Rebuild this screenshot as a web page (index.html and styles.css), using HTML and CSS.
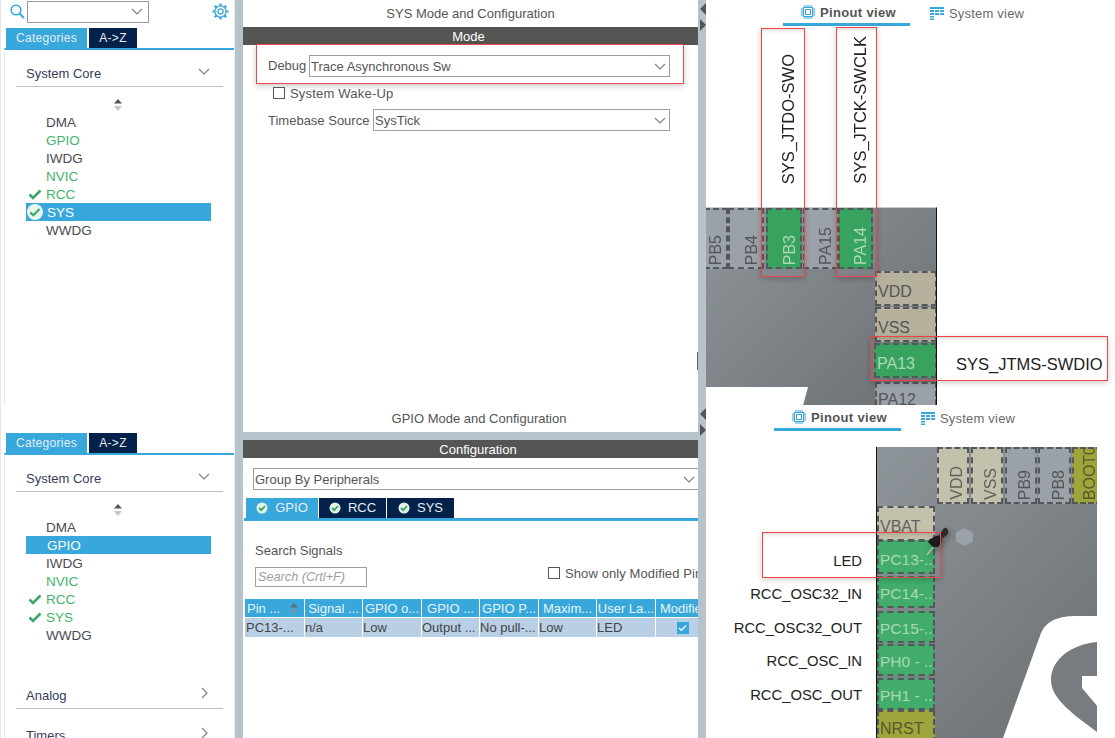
FILE: index.html
```html
<!DOCTYPE html>
<html lang="en">
<head>
    <meta charset="UTF-8">
    <meta name="viewport" content="width=device-width, initial-scale=1.0">
    <title>STM32 Pinout Configuration</title>
    <link rel="stylesheet" href="styles.css">
</head>
<body>
    <svg class="defs" width="0" height="0">
        <symbol id="check" viewBox="0 0 14 12"><path d="M1.5 6.5 5 10 12.5 2.5" fill="none" stroke="#3aa867" stroke-width="2.6"/></symbol>
        <symbol id="chevron-down" viewBox="0 0 12 7"><path d="M1 1 6 6 11 1" fill="none" stroke="#7b8388" stroke-width="1.2"/></symbol>
        <symbol id="chevron-right" viewBox="0 0 7 12"><path d="M1 1 6 6 1 11" fill="none" stroke="#7b8388" stroke-width="1.2"/></symbol>
        <symbol id="sort" viewBox="0 0 10 12"><path d="M5 0 9 4.5H1Z" fill="#555"/><path d="M1 7H9L5 12Z" fill="#c4c8ca"/></symbol>
        <symbol id="sort-head" viewBox="0 0 10 12"><path d="M5 0 9.5 5H.5Z" fill="#5f6f7a"/><path d="M.5 7H9.5L5 12Z" fill="#7d94a3"/></symbol>
        <symbol id="chip" viewBox="0 0 14 14"><g fill="none" stroke="#38a8dc"><rect x="2.5" y="2.5" width="9" height="9"/><rect x="4.5" y="4.5" width="5" height="5"/><path d="M4 0V2M6 0V2M8 0V2M10 0V2M4 12V14M6 12V14M8 12V14M10 12V14M0 4H2M0 6H2M0 8H2M0 10H2M12 4H14M12 6H14M12 8H14M12 10H14"/></g></symbol>
        <symbol id="sysview" viewBox="0 0 14 13"><g fill="#38a8dc"><rect x="0" y="0" width="14" height="2"/><rect x="0" y="3" width="4" height="2"/><rect x="5" y="3" width="4" height="2"/><rect x="10" y="3" width="4" height="2"/><rect x="0" y="6" width="4" height="2"/><rect x="5" y="6" width="4" height="2"/><rect x="10" y="6" width="4" height="2"/><rect x="0" y="9" width="4" height="1.5"/><rect x="0" y="11.5" width="4" height="1.5"/></g></symbol>
        <symbol id="tab-check" viewBox="0 0 12 12"><circle cx="6" cy="6" r="5.5" fill="#e4f2ea"/><path d="M3 6 5.2 8.2 9 4" fill="none" stroke="#3aa867" stroke-width="1.8"/></symbol>
    </svg>

    <main class="page">
        <!-- first capture: SYS -->
        <section class="side">
            <div class="search-row">
                <svg class="search-icon" width="15" height="15" viewBox="0 0 15 15"><circle cx="6" cy="6" r="4.8" fill="none" stroke="#38a8dc" stroke-width="1.6"/><path d="M9.5 9.5 14 14" stroke="#38a8dc" stroke-width="2"/></svg>
                <div class="search-box"><svg class="chev" width="12" height="7"><use href="#chevron-down"/></svg></div>
                <svg class="gear" width="17" height="17" viewBox="0 0 17 17"><circle cx="8.5" cy="8.5" r="2.6" fill="none" stroke="#38a8dc" stroke-width="1.3"/><circle cx="8.5" cy="8.5" r="5.6" fill="none" stroke="#38a8dc" stroke-width="1.3"/><path d="M8.5 0.5V3M8.5 14V16.5M0.5 8.5H3M14 8.5H16.5M2.8 2.8 4.6 4.6M12.4 12.4 14.2 14.2M2.8 14.2 4.6 12.4M12.4 4.6 14.2 2.8" stroke="#38a8dc" stroke-width="2.2"/></svg>
            </div>
            <div class="cat-tabs">
                <span class="cat-tab active">Categories</span>
                <span class="cat-tab">A-&gt;Z</span>
            </div>
            <div class="cat-body">
                <div class="section-head"><span>System Core</span><svg width="12" height="7"><use href="#chevron-down"/></svg></div>
                <svg class="sort-mark" width="10" height="12"><use href="#sort"/></svg>
                <ul class="items">
                    <li>DMA</li>
                    <li class="ok">GPIO</li>
                    <li>IWDG</li>
                    <li class="ok">NVIC</li>
                    <li class="ok"><svg class="tick" width="14" height="12"><use href="#check"/></svg>RCC</li>
                    <li class="selected"><span class="tick-round"><svg width="12" height="10"><use href="#check"/></svg></span>SYS</li>
                    <li>WWDG</li>
                </ul>
            </div>
        </section>

        <div class="splitter"></div>

        <section class="middle">
            <h2 class="mid-title">SYS Mode and Configuration</h2>
            <div class="bar">Mode</div>
            <div class="debug-row">
                <label class="debug-label">Debug</label>
                <div class="select debug-select">Trace Asynchronous Sw<svg width="12" height="7"><use href="#chevron-down"/></svg></div>
            </div>
            <div class="wake-row"><span class="box"></span>System Wake-Up</div>
            <div class="timebase-row">
                <label>Timebase Source</label>
                <div class="select time-select">SysTick<svg width="12" height="7"><use href="#chevron-down"/></svg></div>
            </div>
        </section>

        <div class="gutter">
            <span class="arrow-left"></span>
            <span class="arrow-right"></span>
            <span class="handle"></span>
        </div>

        <section class="right">
            <div class="views">
                <span class="view active"><svg width="14" height="14"><use href="#chip"/></svg>Pinout view</span>
                <span class="view"><svg width="14" height="13"><use href="#sysview"/></svg>System view</span>
            </div>
            <div class="chip chip-top">
                <div class="pin up gray p-pb5"><span>PB5</span></div>
                <div class="pin up gray p-pb4"><span>PB4</span></div>
                <div class="pin up green p-pb3"><span>PB3</span></div>
                <div class="pin up gray p-pa15"><span>PA15</span></div>
                <div class="pin up green p-pa14"><span>PA14</span></div>
                <div class="pin beige p-vdd">VDD</div>
                <div class="pin beige p-vss">VSS</div>
                <div class="pin green p-pa13">PA13</div>
                <div class="pin gray p-pa12">PA12</div>
                <div class="notch"></div>
            </div>
            <div class="signal up-label l-jtdo">SYS_JTDO-SWO</div>
            <div class="signal up-label l-jtck">SYS_JTCK-SWCLK</div>
            <div class="signal l-jtms">SYS_JTMS-SWDIO</div>
            <div class="red-box r-jtdo"></div>
            <div class="red-box r-jtck"></div>
            <div class="red-box r-jtms"></div>
        </section>

        <!-- second capture: GPIO -->
        <section class="side">
            <div class="search-row"></div>
            <div class="cat-tabs">
                <span class="cat-tab active">Categories</span>
                <span class="cat-tab">A-&gt;Z</span>
            </div>
            <div class="cat-body">
                <div class="section-head"><span>System Core</span><svg width="12" height="7"><use href="#chevron-down"/></svg></div>
                <svg class="sort-mark" width="10" height="12"><use href="#sort"/></svg>
                <ul class="items">
                    <li>DMA</li>
                    <li class="selected">GPIO</li>
                    <li>IWDG</li>
                    <li class="ok">NVIC</li>
                    <li class="ok"><svg class="tick" width="14" height="12"><use href="#check"/></svg>RCC</li>
                    <li class="ok"><svg class="tick" width="14" height="12"><use href="#check"/></svg>SYS</li>
                    <li>WWDG</li>
                </ul>
                <div class="section-head closed analog"><span>Analog</span><svg width="7" height="12"><use href="#chevron-right"/></svg></div>
                <div class="section-head closed timers"><span>Timers</span><svg width="7" height="12"><use href="#chevron-right"/></svg></div>
            </div>
        </section>

        <div class="splitter"></div>

        <section class="middle">
            <h2 class="mid-title second">GPIO Mode and Configuration</h2>
            <div class="strip"></div>
            <div class="bar bar-config">Configuration</div>
            <div class="group-select">Group By Peripherals<svg width="12" height="7"><use href="#chevron-down"/></svg></div>
            <div class="pin-tabs">
                <span class="pin-tab active"><svg width="12" height="12"><use href="#tab-check"/></svg>GPIO</span>
                <span class="pin-tab"><svg width="12" height="12"><use href="#tab-check"/></svg>RCC</span>
                <span class="pin-tab"><svg width="12" height="12"><use href="#tab-check"/></svg>SYS</span>
            </div>
            <div class="search-block">
                <div class="search-left">
                    <div class="search-title">Search Signals</div>
                    <div class="search-input">Search (Crtl+F)</div>
                </div>
                <div class="only-modified"><span class="box"></span>Show only Modified Pin</div>
            </div>
            <div class="table">
                <div class="th sorted">Pin ...<svg width="10" height="11"><use href="#sort-head"/></svg></div>
                <div class="th">Signal ...</div>
                <div class="th">GPIO o...</div>
                <div class="th">GPIO ...</div>
                <div class="th">GPIO P...</div>
                <div class="th">Maxim...</div>
                <div class="th">User La...</div>
                <div class="th">Modified</div>
                <div class="td first">PC13-...</div>
                <div class="td">n/a</div>
                <div class="td">Low</div>
                <div class="td">Output ...</div>
                <div class="td">No pull-...</div>
                <div class="td">Low</div>
                <div class="td">LED</div>
                <div class="td cell-check"><span class="checked"><svg width="9" height="8" viewBox="0 0 9 8"><path d="M1 4 3.4 6.4 8 1.5" fill="none" stroke="#fff" stroke-width="1.3"/></svg></span></div>
            </div>
        </section>

        <div class="gutter">
            <span class="arrow-left"></span>
            <span class="arrow-right"></span>
        </div>

        <section class="right">
            <div class="views second">
                <span class="view active"><svg width="14" height="14"><use href="#chip"/></svg>Pinout view</span>
                <span class="view"><svg width="14" height="13"><use href="#sysview"/></svg>System view</span>
            </div>
            <div class="chip chip-bottom">
                <svg class="logo" width="221" height="291" viewBox="0 0 221 291">
                    <path d="M126 291 164 186C170 172 185 169 199 169H221V291Z" fill="#fff"/>
                    <path d="M221 195C195 197 174 212 174 233 174 247 186 258 200 270L228 291H221Z" fill="#787c80"/>
                    <path d="M221 229H205V241L221 260Z" fill="#fff"/>
                </svg>
                <div class="pin up pale p-vdd2"><span>VDD</span></div>
                <div class="pin up pale p-vss2"><span>VSS</span></div>
                <div class="pin up gray p-pb9"><span>PB9</span></div>
                <div class="pin up gray p-pb8"><span>PB8</span></div>
                <div class="pin up olive p-boot"><span>BOOT0</span></div>
                <div class="pin pale p-vbat">VBAT</div>
                <div class="pin light-green p-pc13">PC13-..</div>
                <div class="pin light-green p-pc14">PC14-..</div>
                <div class="pin light-green p-pc15">PC15-..</div>
                <div class="pin light-green p-ph0">PH0 - ..</div>
                <div class="pin light-green p-ph1">PH1 - ..</div>
                <div class="pin olive p-nrst">NRST</div>
                <div class="hex"></div>
                <svg class="tack" width="28" height="34" viewBox="0 0 28 34">
                    <path d="M1 31 7 23" stroke="#b4b8ba" stroke-width="1.6"/>
                    <path d="M15 11C10 11 3 15 2 18L7 23H12C15 20 17 15 15 11Z" fill="#1c1c1c"/>
                    <path d="M14 10 18 4C21 3 23 7 22 10L17 14Z" fill="#2b2b2b"/>
                </svg>
            </div>
            <div class="signal l-led">LED</div>
            <div class="signal l-osc32in">RCC_OSC32_IN</div>
            <div class="signal l-osc32out">RCC_OSC32_OUT</div>
            <div class="signal l-oscin">RCC_OSC_IN</div>
            <div class="signal l-oscout">RCC_OSC_OUT</div>
            <div class="red-box r-led"></div>
        </section>
    </main>
</body>
</html>
```
FILE: styles.css
```css
* {
    box-sizing: border-box;
}

html, body {
    margin: 0;
    padding: 0;
    height: 100%;
    overflow: hidden;
    background: #fff;
}

body {
    font-family: "Liberation Sans", Arial, sans-serif;
    font-size: 13px;
    color: #555;
}

.defs {
    position: absolute;
}

.page {
    display: grid;
    grid-template-columns: 235px 8px 455px 8px 409px;
    grid-template-rows: 405px 333px;
    width: 1115px;
    height: 738px;
}

.splitter, .gutter {
    background: #b7c3ca;
}

.gutter {
    position: relative;
    display: flex;
    flex-direction: column;
    gap: 4px;
    padding: 3px 0 0 2px;
}

.arrow-left, .arrow-right {
    width: 0;
    height: 0;
    border-top: 6px solid transparent;
    border-bottom: 6px solid transparent;
}

.arrow-left {
    border-right: 6px solid #555;
}

.arrow-right {
    border-left: 6px solid #555;
}

.handle {
    position: absolute;
    left: -1px;
    top: 352px;
    width: 1px;
    height: 18px;
    background: #5b6468;
}

/* left column */
.side {
    overflow: hidden;
    border-left: 1px solid #e4e8ea;
    border-right: 1px solid #eef0f2;
}

.search-row {
    display: flex;
    align-items: center;
    height: 28px;
    padding: 0 0 5px 9px;
}

.search-icon {
    flex: none;
}

.search-box {
    display: flex;
    align-items: center;
    justify-content: flex-end;
    width: 122px;
    height: 22px;
    margin-left: 2px;
    padding-right: 5px;
    border: 1px solid #969a9c;
}

.gear {
    margin-left: 63px;
}

.cat-tabs {
    display: flex;
    gap: 2px;
    height: 20px;
    padding-left: 5px;
}

.cat-tab {
    display: flex;
    align-items: center;
    justify-content: center;
    width: 48px;
    background: #04214a;
    color: #e6edf2;
    font-size: 12px;
    letter-spacing: 0.3px;
}

.cat-tab.active {
    width: 81px;
    background: #38a8dc;
}

.cat-body {
    height: 500px;
    margin-left: 3px;
    border-top: 2px solid #38a8dc;
    border-left: 1px solid #e8ecee;
    padding: 0 11px;
}

.section-head {
    display: flex;
    align-items: center;
    justify-content: space-between;
    height: 37px;
    padding: 11px 13px 0 10px;
    border-bottom: 1px solid #b8c3c9;
    color: #353c5e;
    font-size: 13px;
}

.section-head svg {
    margin-bottom: 5px;
}

.closed {
    padding-right: 15px;
}

.analog {
    margin-top: 28px;
}

.timers {
    border: none;
    padding-top: 15px;
    height: 38px;
}

.sort-mark {
    display: block;
    margin: 12px 0 0 97px;
}

.items {
    list-style: none;
    margin: 2px 0 0;
    padding: 0;
}

.items li {
    display: flex;
    align-items: center;
    position: relative;
    height: 18px;
    margin-left: 10px;
    width: 185px;
    padding-left: 20px;
    color: #4a4a55;
    font-size: 13.5px;
}

.items li.ok {
    color: #3fb56c;
}

.items li.selected {
    background: #38a8dc;
    color: #fff;
    padding-left: 21px;
}

.tick {
    position: absolute;
    left: 2px;
    top: 3px;
}

.tick-round {
    display: flex;
    align-items: center;
    justify-content: center;
    position: absolute;
    left: 1px;
    top: 1px;
    width: 16px;
    height: 16px;
    border-radius: 50%;
    background: #e9f4ee;
}

/* middle column */
.middle {
    overflow: hidden;
    background: #fff;
}

.mid-title {
    margin: 0;
    height: 27px;
    line-height: 27px;
    text-align: center;
    font-size: 13px;
    font-weight: normal;
    color: #555;
}

.mid-title.second {
    padding-left: 17px;
}

.strip {
    height: 8px;
    background: #b7c3ca;
}

.bar {
    height: 18px;
    line-height: 19px;
    padding-right: 4px;
    background: #555654;
    color: #fff;
    text-align: center;
    font-size: 13px;
}

.bar-config {
    padding: 0 0 0 15px;
}

.select, .group-select {
    display: flex;
    align-items: center;
    justify-content: space-between;
    height: 22px;
    padding: 0 3px 0 1px;
    border: 1px solid #9a9ea0;
    color: #555;
}

.debug-row {
    display: flex;
    align-items: flex-start;
    width: 428px;
    height: 40px;
    margin: -1px 0 0 13px;
    padding: 10px 0 0 11px;
    border: 1px solid #f04848;
    box-shadow: 0 2px 6px rgba(0, 0, 0, 0.22);
}

.debug-label {
    width: 41px;
    line-height: 22px;
}

.debug-select {
    width: 361px;
}

.wake-row {
    display: flex;
    align-items: center;
    gap: 5px;
    height: 18px;
    margin: 0 0 0 30px;
    letter-spacing: 0.2px;
}

.box {
    display: inline-block;
    flex: none;
    width: 12px;
    height: 12px;
    border: 1px solid #555;
    background: #fff;
}

.timebase-row {
    display: flex;
    align-items: center;
    margin: 7px 0 0 25px;
}

.timebase-row label {
    width: 105px;
    white-space: nowrap;
}

.time-select {
    width: 297px;
}

.group-select {
    width: 446px;
    margin: 10px 0 0 10px;
}

.pin-tabs {
    display: flex;
    gap: 1px;
    height: 23px;
    margin: 8px 0 0 1px;
    padding-left: 2px;
    border-bottom: 3px solid #38a8dc;
}

.pin-tab {
    display: flex;
    align-items: center;
    justify-content: center;
    gap: 7px;
    width: 67px;
    padding-bottom: 1px;
    background: #04214a;
    color: #e6edf2;
}

.pin-tab.active {
    width: 72px;
    background: #38a8dc;
}

.search-block {
    display: flex;
    justify-content: space-between;
    height: 78px;
    padding: 20px 0 0 12px;
}

.search-title {
    line-height: 20px;
}

.search-input {
    width: 112px;
    height: 20px;
    margin-top: 6px;
    padding-left: 2px;
    border: 1px solid #9a9ea0;
    color: #9a9ea0;
    font-size: 12.7px;
    font-style: italic;
    line-height: 18px;
}

.only-modified {
    display: flex;
    align-items: center;
    gap: 5px;
    width: 150px;
    height: 16px;
    margin-top: 24px;
    letter-spacing: 0.1px;
    white-space: nowrap;
    overflow: hidden;
}

.table {
    display: grid;
    grid-template-columns: 59px 57px 58px 57px 58px 57px 58px 57px;
    gap: 1px;
    margin-left: 2px;
}

.th {
    display: flex;
    align-items: center;
    justify-content: center;
    height: 18px;
    background: #38a8dc;
    color: #e8f4fa;
    white-space: nowrap;
    overflow: hidden;
}

.th.sorted {
    justify-content: space-between;
    padding: 0 5px 0 2px;
}

.td {
    height: 19px;
    line-height: 19px;
    background: #b8cfe6;
    color: #444;
    white-space: nowrap;
    overflow: hidden;
}

.td.first {
    padding-left: 1px;
}

.cell-check {
    display: flex;
    align-items: center;
    justify-content: center;
    padding-right: 4px;
}

.checked {
    display: flex;
    align-items: center;
    justify-content: center;
    width: 12px;
    height: 12px;
    background: #38a8dc;
}

/* right column: pin canvas */
.right {
    position: relative;
    overflow: hidden;
    background: #fff;
}

.views {
    display: flex;
    align-items: center;
    gap: 20px;
    height: 25px;
    margin-left: 77px;
    padding-top: 1px;
}

.views.second {
    margin-left: 68px;
}

.view {
    display: flex;
    align-items: center;
    gap: 5px;
    height: 25px;
    padding-top: 1px;
    font-size: 13px;
    letter-spacing: 0.2px;
    color: #6a6a6a;
}

.view.active {
    width: 127px;
    padding-left: 4px;
    justify-content: center;
    border-bottom: 3px solid #38a8dc;
    font-weight: bold;
    letter-spacing: 0.35px;
    color: #555;
}

.chip {
    position: absolute;
    overflow: hidden;
    background: linear-gradient(135deg, #8e959a 0%, #6b6f72 100%);
}

.chip-top {
    left: 0;
    top: 207px;
    width: 231px;
    height: 198px;
    border-right: 1px solid #111;
    border-top: 1px solid #c8cccf;
}

.chip-bottom {
    left: 170px;
    top: 42px;
    width: 221px;
    height: 291px;
    border-left: 1px solid #111;
}

.logo {
    position: absolute;
    left: 0;
    top: 0;
}

.notch {
    position: absolute;
    left: 0;
    top: 179px;
    width: 102px;
    height: 19px;
    background: #fff;
    clip-path: polygon(0 0, 100% 0, 95% 100%, 0 100%);
}

.pin {
    position: absolute;
    display: flex;
    align-items: flex-end;
    padding: 0 0 3px 1px;
    border: 2px dashed #55585a;
    font-size: 16px;
    line-height: 18px;
    white-space: nowrap;
    overflow: hidden;
}

.pin.up {
    justify-content: flex-end;
    padding: 0 1px 2px 0;
}

.pin.up span {
    writing-mode: vertical-rl;
    transform: rotate(180deg);
}

.gray {
    background: #9aa1a8;
    color: #555;
}

.green {
    background: #38a35e;
    color: #a9d9b6;
}

.light-green {
    background: #42ad6a;
    color: #a9d9b6;
    font-size: 15.5px;
}

.beige {
    background: #b5b19c;
    color: #555;
}

.pale {
    background: #c3c1ab;
    color: #606060;
}

.olive {
    background: #9fa53d;
    color: #55582a;
}

.p-pb5 { left: -2px; top: 0; width: 24px; height: 61px; }
.p-pb4 { left: 22px; top: 0; width: 36px; height: 61px; }
.p-pb3 { left: 60px; top: 0; width: 36px; height: 61px; }
.p-pa15 { left: 97px; top: 0; width: 35px; height: 61px; }
.p-pa14 { left: 132px; top: 0; width: 35px; height: 61px; }
.p-vdd { left: 169px; top: 63px; width: 62px; height: 35px; }
.p-vss { left: 169px; top: 99px; width: 62px; height: 35px; }
.p-pa13 { left: 168px; top: 135px; width: 63px; height: 35px; }
.p-pa12 { left: 169px; top: 174px; width: 62px; height: 32px; }

.p-vdd2 { left: 60px; top: 0; width: 32px; height: 57px; }
.p-vss2 { left: 94px; top: 0; width: 32px; height: 57px; }
.p-pb9 { left: 128px; top: 0; width: 32px; height: 57px; }
.p-pb8 { left: 161px; top: 0; width: 33px; height: 57px; }
.p-boot { left: 195px; top: 0; width: 30px; height: 57px; }
.p-vbat { left: 0; top: 59px; width: 58px; height: 35px; }
.p-pc13 { left: 0; top: 93px; width: 58px; height: 34px; }
.p-pc14 { left: 0; top: 129px; width: 58px; height: 32px; }
.p-pc15 { left: 0; top: 164px; width: 58px; height: 32px; }
.p-ph0 { left: 0; top: 197px; width: 58px; height: 32px; }
.p-ph1 { left: 0; top: 231px; width: 58px; height: 32px; }
.p-nrst { left: 0; top: 263px; width: 58px; height: 33px; }

.hex {
    position: absolute;
    left: 79px;
    top: 81px;
    width: 17px;
    height: 18px;
    background: #9aa1a8;
    clip-path: polygon(50% 0, 100% 25%, 100% 75%, 50% 100%, 0 75%, 0 25%);
}

.tack {
    position: absolute;
    left: 49px;
    top: 77px;
    filter: drop-shadow(2px 2px 3px rgba(0, 0, 0, 0.35));
}

.signal {
    position: absolute;
    color: #222;
    font-size: 14.8px;
    line-height: 18px;
    white-space: nowrap;
}

.up-label {
    writing-mode: vertical-rl;
    transform: rotate(180deg);
    font-size: 16.5px;
}

.l-jtdo { left: 73px; bottom: 221px; }
.l-jtck { left: 145px; bottom: 221px; }
.l-jtms { left: 250px; top: 355px; font-size: 16.5px; }

.l-led { right: 253px; top: 147px; }
.l-osc32in { right: 253px; top: 180px; }
.l-osc32out { right: 253px; top: 214px; }
.l-oscin { right: 253px; top: 247px; }
.l-oscout { right: 253px; top: 281px; }

.red-box {
    position: absolute;
    border: 1px solid #f24444;
    box-shadow: 0 2px 6px rgba(0, 0, 0, 0.2), inset 0 4px 5px -3px rgba(0, 0, 0, 0.18);
}

.r-jtdo { left: 55px; top: 28px; width: 44px; height: 249px; }
.r-jtck { left: 130px; top: 27px; width: 41px; height: 250px; }
.r-jtms { left: 164px; top: 336px; width: 238px; height: 45px; }
.r-led { left: 56px; top: 127px; width: 179px; height: 46px; }
```
